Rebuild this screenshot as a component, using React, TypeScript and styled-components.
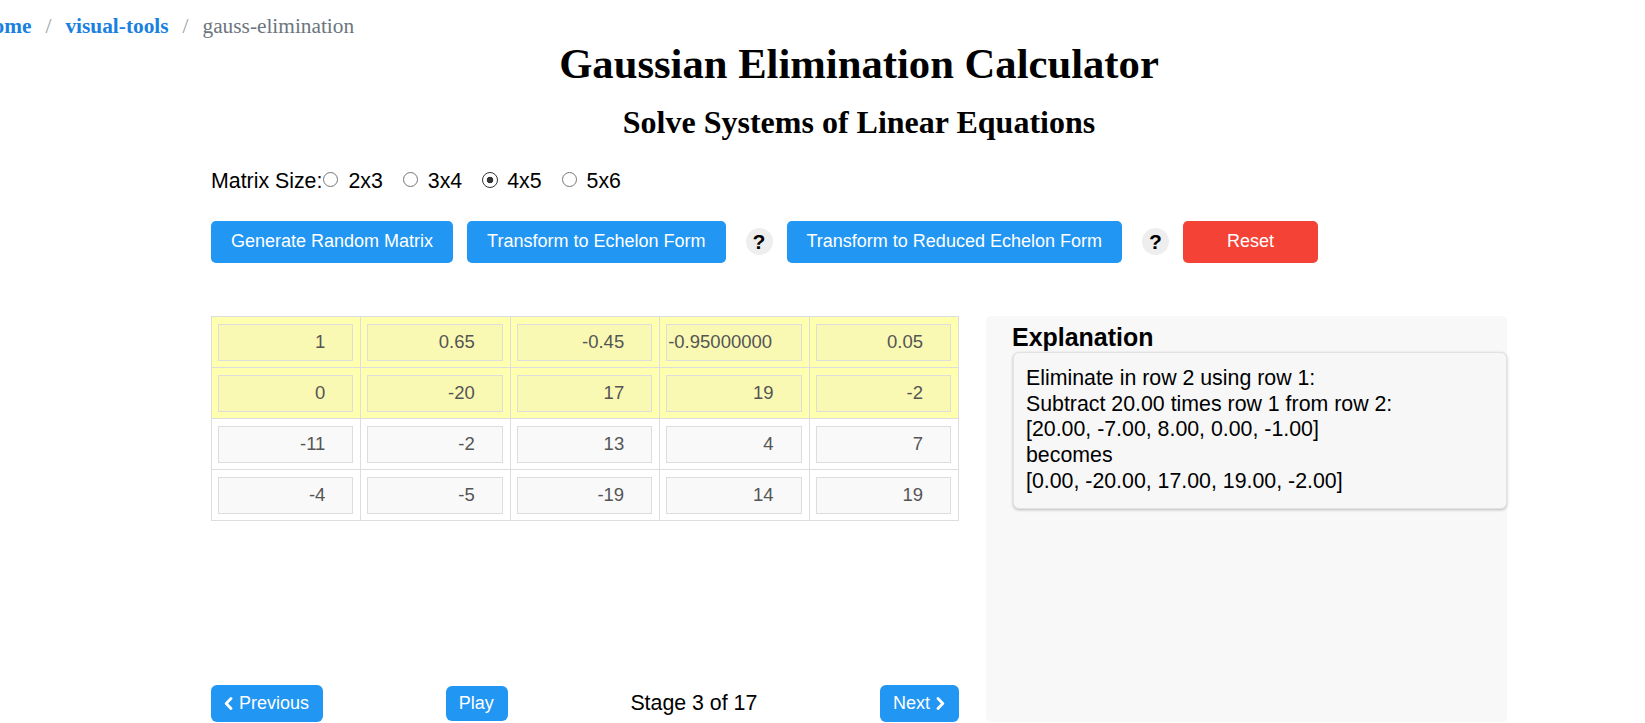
import React from "react";
import styled, { createGlobalStyle } from "styled-components";

const GlobalStyle = createGlobalStyle`
  html, body {
    margin: 0;
    padding: 0;
    background: #fff;
    overflow: hidden;
  }
  body {
    font-family: "Liberation Serif", "Times New Roman", serif;
    color: #000;
  }
`;

const Page = styled.div`
  width: 1645px;
  height: 723px;
  overflow: hidden;
`;

const Breadcrumb = styled.nav`
  display: flex;
  align-items: baseline;
  margin-left: -23px;
  padding-top: 14px;
  font-size: 21.33px;
  line-height: 24px;
  white-space: nowrap;
`;

const Crumb = styled.a`
  color: #1a80e0;
  font-weight: bold;
  text-decoration: none;
`;

const Separator = styled.span`
  color: #9aa0a6;
  padding: 0 14px;
`;

const Current = styled.span`
  color: #6c757d;
`;

const Container = styled.main`
  margin-left: 211px;
  width: 1296px;
  display: flex;
  flex-direction: column;
`;

const Title = styled.h1`
  margin: 2px 0 0;
  text-align: center;
  font-size: 42.67px;
  line-height: 47px;
  font-weight: bold;
`;

const Subtitle = styled.h2`
  margin: 17px 0 0;
  text-align: center;
  font-size: 32px;
  line-height: 36px;
  font-weight: bold;
`;

const SizeRow = styled.div`
  display: flex;
  align-items: center;
  margin-top: 29px;
  font-family: "Liberation Sans", Arial, sans-serif;
  font-size: 21.33px;
  line-height: 24.5px;
`;

const SizeOption = styled.label<{ $first?: boolean }>`
  display: inline-flex;
  align-items: center;
  margin-left: ${(p) => (p.$first ? "1px" : "20px")};
`;

const Radio = styled.input`
  appearance: none;
  margin: 0 10px 3px 0;
  width: 15px;
  height: 15px;
  border: 1px solid #767676;
  border-radius: 50%;
  background: #fff;
  box-sizing: border-box;

  &:checked {
    width: 16px;
    height: 16px;
    margin-right: 9px;
    border-color: #333;
    background: radial-gradient(circle, #333 0 3px, #fff 3.6px);
  }
`;

const ActionRow = styled.div`
  display: flex;
  align-items: center;
  gap: 14px;
  margin-top: 27px;
`;

const Button = styled.button<{ $variant?: "danger" }>`
  height: 42px;
  padding: 0 20px;
  min-width: ${(p) => (p.$variant === "danger" ? "135px" : "0")};
  border: none;
  border-radius: 5px;
  background: ${(p) => (p.$variant === "danger" ? "#f44336" : "#2196f3")};
  color: #fff;
  font-family: "Liberation Sans", Arial, sans-serif;
  font-size: 18px;
  cursor: pointer;
`;

const Help = styled.span`
  display: inline-flex;
  align-items: center;
  justify-content: center;
  width: 27px;
  height: 27px;
  margin-left: 6px;
  border-radius: 50%;
  background: #eee;
  font-family: "Liberation Sans", Arial, sans-serif;
  font-weight: bold;
  font-size: 21px;
`;

const Workspace = styled.div`
  display: flex;
  gap: 27px;
  height: 406px;
  margin-top: 53px;
`;

const MatrixColumn = styled.div`
  width: 748px;
  display: flex;
  flex-direction: column;
  justify-content: space-between;
`;

const Matrix = styled.table`
  width: 748px;
  border-collapse: collapse;
  table-layout: fixed;
`;

const Row = styled.tr<{ $active?: boolean }>`
  background: ${(p) => (p.$active ? "#ffffb0" : "#fff")};
`;

const Cell = styled.td`
  border: 1px solid #ddd;
  padding: 7px 7px 6px 6px;
`;

const CellInput = styled.input<{ $active?: boolean; $overflow?: boolean }>`
  display: block;
  width: 100%;
  height: 37px;
  box-sizing: border-box;
  border: 1px solid #ddd;
  background: ${(p) => (p.$active ? "#f9f9b4" : "#f9f9f9")};
  padding: ${(p) => (p.$overflow ? "0 27px 0 1px" : "0 27px 0 8px")};
  text-align: ${(p) => (p.$overflow ? "left" : "right")};
  font-family: "Liberation Sans", Arial, sans-serif;
  font-size: 18.5px;
  color: #555;
  outline: none;
`;

const StepNav = styled.div`
  display: flex;
  align-items: center;
  justify-content: space-between;
  font-family: "Liberation Sans", Arial, sans-serif;
`;

const NavButton = styled.button<{ $short?: boolean }>`
  display: inline-flex;
  align-items: center;
  gap: 6px;
  height: ${(p) => (p.$short ? "35px" : "37px")};
  padding: 0 14px 0 13px;
  border: none;
  border-radius: 6px;
  background: #2196f3;
  color: #fff;
  font-family: "Liberation Sans", Arial, sans-serif;
  font-size: 18px;
  cursor: pointer;
`;

const StageLabel = styled.span`
  font-size: 21.33px;
  color: #000;
`;

const ExplanationPanel = styled.aside`
  width: 521px;
  box-sizing: border-box;
  padding: 7px 0 0 26px;
  background: #f8f8f8;
  border-radius: 5px;
  font-family: "Liberation Sans", Arial, sans-serif;
`;

const PanelTitle = styled.h3`
  margin: 0 0 1px;
  font-size: 24.96px;
  line-height: 28.7px;
  font-weight: bold;
`;

const ExplanationBox = styled.div`
  margin-left: 1px;
  padding: 13px 12px 14px;
  border: 1px solid #e2e2e2;
  border-radius: 6px;
  background: #f7f7f7;
  box-shadow: 0 1px 3px rgba(0, 0, 0, 0.25);
  font-size: 21.33px;
  line-height: 25.6px;
`;

const Chevron = ({ dir }: { dir: "left" | "right" }) => (
  <svg width="9" height="13" viewBox="0 0 9 13" fill="none">
    <polyline
      points={dir === "left" ? "7,1.5 2.2,6.5 7,11.5" : "2,1.5 6.8,6.5 2,11.5"}
      stroke="#fff"
      strokeWidth="2.8"
      strokeLinecap="round"
      strokeLinejoin="round"
    />
  </svg>
);

const matrix = [
  ["1", "0.65", "-0.45", "-0.95000000", "0.05"],
  ["0", "-20", "17", "19", "-2"],
  ["-11", "-2", "13", "4", "7"],
  ["-4", "-5", "-19", "14", "19"],
];

const sizes = ["2x3", "3x4", "4x5", "5x6"];

const explanation = [
  "Eliminate in row 2 using row 1:",
  "Subtract 20.00 times row 1 from row 2:",
  "[20.00, -7.00, 8.00, 0.00, -1.00]",
  "becomes",
  "[0.00, -20.00, 17.00, 19.00, -2.00]",
];

const App = () => {
  return (
    <Page>
      <GlobalStyle />
      <Breadcrumb>
        <Crumb href="#">Home</Crumb>
        <Separator>/</Separator>
        <Crumb href="#">visual-tools</Crumb>
        <Separator>/</Separator>
        <Current>gauss-elimination</Current>
      </Breadcrumb>

      <Container>
        <Title>Gaussian Elimination Calculator</Title>
        <Subtitle>Solve Systems of Linear Equations</Subtitle>

        <SizeRow>
          <span>Matrix Size:</span>
          {sizes.map((s, i) => (
            <SizeOption key={s} $first={i === 0}>
              <Radio type="radio" name="size" defaultChecked={s === "4x5"} />
              {s}
            </SizeOption>
          ))}
        </SizeRow>

        <ActionRow>
          <Button>Generate Random Matrix</Button>
          <Button>Transform to Echelon Form</Button>
          <Help>?</Help>
          <Button>Transform to Reduced Echelon Form</Button>
          <Help>?</Help>
          <Button $variant="danger">Reset</Button>
        </ActionRow>

        <Workspace>
          <MatrixColumn>
            <Matrix>
              <tbody>
                {matrix.map((row, r) => (
                  <Row key={r} $active={r < 2}>
                    {row.map((v, c) => (
                      <Cell key={c}>
                        <CellInput
                          type="text"
                          readOnly
                          value={v}
                          $active={r < 2}
                          $overflow={v.length > 10}
                        />
                      </Cell>
                    ))}
                  </Row>
                ))}
              </tbody>
            </Matrix>

            <StepNav>
              <NavButton>
                <Chevron dir="left" />
                Previous
              </NavButton>
              <NavButton $short>Play</NavButton>
              <StageLabel>Stage 3 of 17</StageLabel>
              <NavButton>
                Next
                <Chevron dir="right" />
              </NavButton>
            </StepNav>
          </MatrixColumn>

          <ExplanationPanel>
            <PanelTitle>Explanation</PanelTitle>
            <ExplanationBox>
              {explanation.map((line) => (
                <div key={line}>{line}</div>
              ))}
            </ExplanationBox>
          </ExplanationPanel>
        </Workspace>
      </Container>
    </Page>
  );
};

export default App;
